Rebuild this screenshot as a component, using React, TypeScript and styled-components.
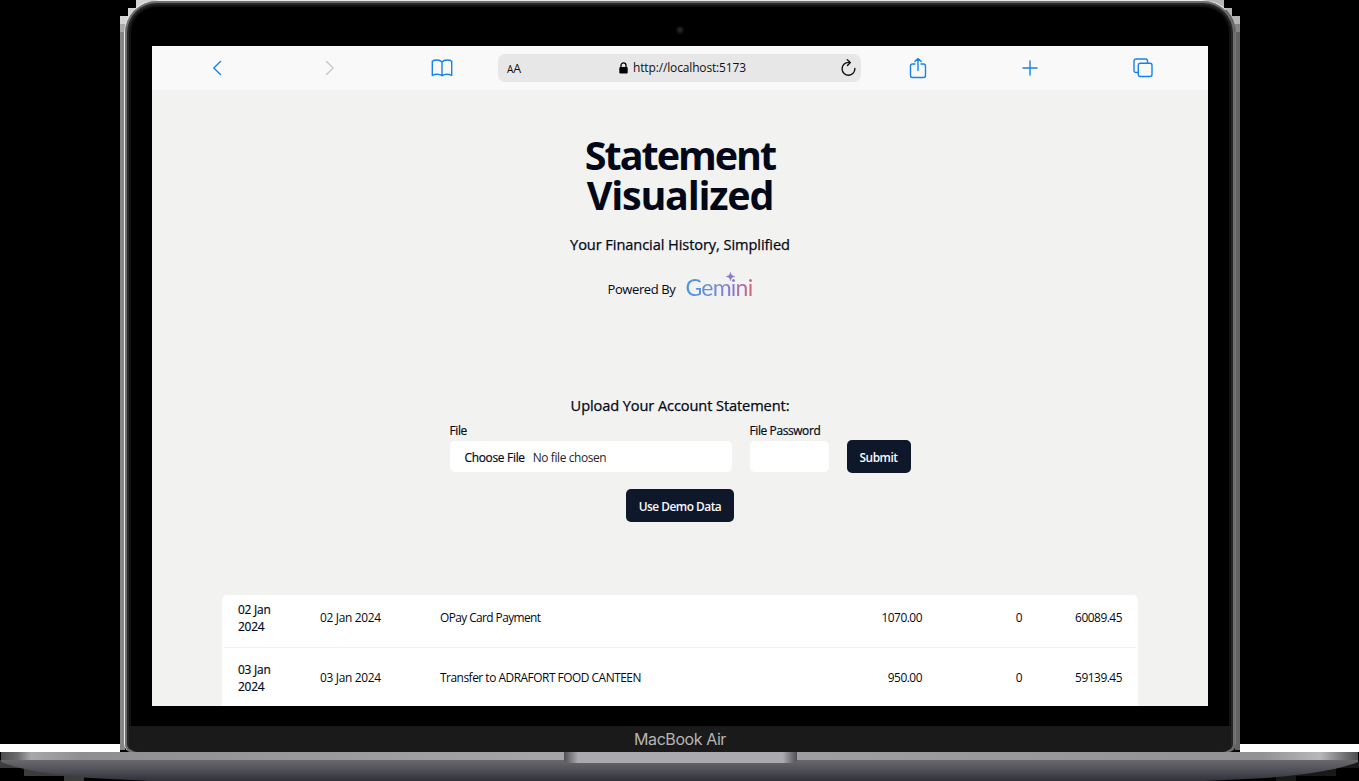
import React from "react";
import styled, { createGlobalStyle } from "styled-components";

const Global = createGlobalStyle`
  * { box-sizing: border-box; }
  html, body { margin: 0; background: #000; }
  body { font-family: "Open Sans", "Noto Sans", sans-serif; color: #020817; overflow: hidden; }
`;

const Stage = styled.main`
  position: relative;
  width: 1359px;
  height: 781px;
  display: flex;
  flex-direction: column;
  background: #000;
  overflow: hidden;
`;

const EdgeArt = styled.svg`
  position: absolute;
  inset: 0;
  pointer-events: none;
`;

const Lid = styled.section`
  position: relative;
  width: 1112px;
  height: 752px;
  flex: none;
  margin-left: 124px;
  border-radius: 33px 33px 8px 8px;
  border: 1px solid #e9e9e9;
  border-right-color: #777;
  border-bottom: 0;
  background: #000;
  box-shadow: inset 0 0 0 2px #6e6e6e, inset 0 0 0 4px #262626, inset 0 0 0 6px #111;
  display: flex;
  flex-direction: column;
  align-items: center;
  overflow: hidden;
`;

const Bezel = styled.div`
  height: 45px;
  flex: none;
  padding-top: 25px;
`;

const Camera = styled.div`
  width: 8px;
  height: 8px;
  border-radius: 50%;
  background: radial-gradient(circle, #242424 0 1.5px, #0d0d0d 3px);
`;

const Screen = styled.div`
  width: 1056px;
  height: 660px;
  flex: none;
  background: #f2f2f0;
  overflow: hidden;
`;

const Chin = styled.div`
  width: 1102px;
  height: 26px;
  margin-top: 20px;
  flex: none;
  border-radius: 0 0 8px 8px;
  background: #1a1a1a;
  color: #b5b5b5;
  display: flex;
  align-items: center;
  justify-content: center;
  font: 400 16px/26px Inter, sans-serif;
  letter-spacing: -0.42px;
`;

const Toolbar = styled.header`
  height: 44px;
  padding: 0 9px;
  display: grid;
  grid-template-columns: repeat(3, 1fr) 363px repeat(3, 1fr);
  align-items: center;
  justify-items: center;
  background: #f9f9f9;
  color: #1683ec;
  border-bottom: 1px solid #f6f6f5;
`;

const Address = styled.div`
  width: 363px;
  height: 28px;
  margin-left: -1px;
  padding: 0 4px 0 9px;
  border-radius: 7px;
  background: #e7e7e7;
  color: #111;
  display: grid;
  grid-template-columns: 61px 1fr 60px;
  align-items: center;
`;

const TextSize = styled.span`
  font-size: 12.5px;
  letter-spacing: -0.2px;
  padding-top: 2px;
  small { font-size: 10px; }
`;

const Url = styled.span`
  display: flex;
  align-items: center;
  justify-content: center;
  gap: 5px;
  font-size: 12px;
  letter-spacing: -0.15px;
`;

const Reload = styled.span`
  display: flex;
  justify-content: flex-end;
`;

const Icon = styled.svg`
  display: block;
  fill: none;
  stroke: currentColor;
  stroke-width: 1.4;
  stroke-linecap: round;
  stroke-linejoin: round;
`;

const Hero = styled.div`
  height: 303px;
  padding-top: 45px;
  display: flex;
  flex-direction: column;
  align-items: center;
`;

const Title = styled.h1`
  margin: 0;
  font-size: 39.5px;
  line-height: 40px;
  font-weight: 700;
  text-align: center;
`;

const TitleLine = styled.span<{ $spacing: string }>`
  display: block;
  letter-spacing: ${(p) => p.$spacing};
`;

const Subtitle = styled.p<{ $spacing: string }>`
  margin: 0;
  font-size: 14.6px;
  line-height: 24px;
  font-weight: 500;
  -webkit-text-stroke: 0.25px currentColor;
  letter-spacing: ${(p) => p.$spacing};
`;

const Tagline = styled.div`
  margin-top: 17px;
`;

const Powered = styled.div`
  margin-top: 15px;
  height: 34px;
  display: flex;
  align-items: center;
  gap: 10px;
  font-size: 13px;
  letter-spacing: -0.4px;
  span { padding-top: 2px; }
`;

const Gemini = styled.div`
  position: relative;
  top: -1px;
  font: 400 23px/28px Lato, sans-serif;
  letter-spacing: -0.75px;
  color: transparent;
  background: linear-gradient(90deg, #4796e3, #6f8bdc 45%, #9177c7 75%, #ca6673);
  background-clip: text;
  -webkit-background-clip: text;
`;

const Spark = styled.svg`
  position: absolute;
  left: 41px;
  top: -1px;
`;

const UploadForm = styled.form`
  height: 202px;
  display: flex;
  flex-direction: column;
  align-items: center;
`;

const Fields = styled.div`
  margin-top: 5px;
  display: flex;
  align-items: flex-end;
`;

const Field = styled.label<{ $width: number }>`
  width: ${(p) => p.$width}px;
  margin-right: 17px;
  font-size: 11.9px;
  line-height: 16px;
  font-weight: 500;
  letter-spacing: -0.36px;
  -webkit-text-stroke: 0.2px currentColor;
`;

const Box = styled.span`
  height: 31px;
  margin: 3px 1px 1px 0;
  padding: 0 15px;
  border-radius: 5px;
  background: #fff;
  display: flex;
  align-items: center;
  gap: 8px;
  letter-spacing: -0.28px;
  em { font-style: normal; font-weight: 400; color: #26282e; letter-spacing: -0.38px; -webkit-text-stroke: 0; }
`;

const Button = styled.button<{ $width: number }>`
  width: ${(p) => p.$width}px;
  height: 33px;
  padding: 0;
  border: 0;
  border-radius: 5px;
  background: #0f172a;
  color: #f8fafc;
  font: 600 11.9px "Open Sans", sans-serif;
  letter-spacing: -0.5px;
`;

const DemoRow = styled.div`
  margin-top: 16px;
`;

const Card = styled.div`
  width: 916px;
  height: 130px;
  margin: 0 auto;
  padding: 0 2px;
  border-radius: 5px 5px 0 0;
  background: #fff;
  overflow: hidden;
`;

const Table = styled.table`
  width: 912px;
  margin-top: -7px;
  table-layout: fixed;
  border-collapse: separate;
  border-spacing: 0;
  font-size: 11.9px;
  line-height: 17px;
`;

const Cell = styled.td<{ $w: number; $right?: boolean; $strong?: boolean; $spacing?: string }>`
  width: ${(p) => p.$w}px;
  height: 60px;
  padding: 0 14px;
  border-bottom: 1px solid #f1f1f1;
  text-align: ${(p) => (p.$right ? "right" : "left")};
  font-weight: ${(p) => (p.$strong ? 500 : 400)};
  -webkit-text-stroke: ${(p) => (p.$strong ? "0.2px currentColor" : "0")};
  letter-spacing: ${(p) => p.$spacing ?? "-0.48px"};
`;

const rows = [
  { day: "02 Jan", text: "OPay Card Payment", debit: "1070.00", credit: "0", balance: "60089.45" },
  { day: "03 Jan", text: "Transfer to ADRAFORT FOOD CANTEEN", debit: "950.00", credit: "0", balance: "59139.45" },
];

function BrowserBar() {
  return (
    <Toolbar>
      <Icon width="10" height="16" viewBox="0 0 10 16"><path d="M8.5 1.5 1.8 8l6.7 6.5" /></Icon>
      <Icon width="10" height="16" viewBox="0 0 10 16" color="#c9c9c9"><path d="m1.5 1.5 6.7 6.5-6.7 6.5" /></Icon>
      <Icon width="22" height="18" viewBox="0 0 22 18">
        <path d="M11 3C9.8 1.6 8 1 6 1 4 1 2.3 1.4 1.3 2.2v14.3C2.6 15.7 4.3 15.3 6 15.3s3.7.4 5 1.5c1.3-1.1 3.3-1.5 5-1.5s3.4.4 4.7 1.2V2.2C19.7 1.4 18 1 16 1s-3.8.6-5 2Zm0 0v13.5" />
      </Icon>
      <Address>
        <TextSize><small>A</small>A</TextSize>
        <Url>
          <svg width="9" height="12" viewBox="0 0 9 12">
            <rect x=".3" y="5" width="8.4" height="6.5" rx="1" fill="#000" />
            <path d="M2 5V3.4a2.5 2.5 0 0 1 5 0V5" fill="none" stroke="#000" strokeWidth="1.3" />
          </svg>
          http://localhost:5173
        </Url>
        <Reload>
          <Icon width="17" height="18" viewBox="0 0 17 18"><path d="M14.9 9.5a6.4 6.4 0 1 1-6.4-6.1h1.4M7.3.8l3 2.7-2.8 3" /></Icon>
        </Reload>
      </Address>
      <Icon width="18" height="22" viewBox="0 0 18 22">
        <path d="M6 7H3.4A1.9 1.9 0 0 0 1.5 8.9v9.7a1.9 1.9 0 0 0 1.9 1.9h11.2a1.9 1.9 0 0 0 1.9-1.9V8.9A1.9 1.9 0 0 0 14.6 7H12M9 13.5V1.5M5.8 4.5 9 1.4l3.2 3.1" />
      </Icon>
      <Icon width="16" height="16" viewBox="0 0 16 16"><path d="M8 1v14M1 8h14" /></Icon>
      <Icon width="20" height="20" viewBox="0 0 20 20">
        <rect x="5.3" y="5.3" width="13.7" height="13.2" rx="2" />
        <path d="M5 14.5H3a2 2 0 0 1-2-2V3a2 2 0 0 1 2-2h9.5a2 2 0 0 1 2 2v2" />
      </Icon>
    </Toolbar>
  );
}

const BaseArt = styled.svg`
  flex: none;
  display: block;
`;

function LaptopBase() {
  return (
    <BaseArt width="1359" height="29" viewBox="0 0 1359 29">
      <defs>
        <linearGradient id="deck" x1="0" x2="1" y1="0" y2="0">
          <stop offset="0" stopColor="#4c4c4e" /><stop offset=".012" stopColor="#6a6a6c" />
          <stop offset=".022" stopColor="#a8a8aa" /><stop offset=".06" stopColor="#8e8e90" />
          <stop offset=".4" stopColor="#a5a5a8" /><stop offset=".93" stopColor="#929294" />
          <stop offset=".972" stopColor="#b8b8ba" /><stop offset="1" stopColor="#4c4c4e" />
        </linearGradient>
        <linearGradient id="under" x1="0" x2="0" y1="0" y2="1">
          <stop offset="0" stopColor="#68686c" /><stop offset=".5" stopColor="#4f5057" /><stop offset="1" stopColor="#303038" />
        </linearGradient>
        <linearGradient id="notch" x1="0" x2="1" y1="0" y2="0">
          <stop offset="0" stopColor="#505054" /><stop offset=".06" stopColor="#aaaaae" />
          <stop offset=".94" stopColor="#aaaaae" /><stop offset="1" stopColor="#505054" />
        </linearGradient>
      </defs>
      <path d="M0 9v7h24v8h40v5h20V20L0 8Z" fill="#3c3c3d" />
      <path d="M1359 9v7h-23v8h-40v5h-20V20Z" fill="#191919" />
      <path d="M1 8h1357v2c-20 8-54 13-92 16l-60 3H150l-60-3C54 23 21 18 1 10Z" fill="url(#under)" />
      <rect x="1" width="1357" height="8" fill="url(#deck)" />
      <path d="M564 0h233v8c0 2-4 3-10 3H574c-6 0-10-1-10-3Z" fill="url(#notch)" />
    </BaseArt>
  );
}

export default function App() {
  return (
    <Stage>
      <Global />
      <EdgeArt width="1359" height="781" shapeRendering="crispEdges">
        <path d="M120 16h8V8h8V0h20v32h-36Z" fill="#d4d4d4" />
        <path d="M1240 16h-8V8h-8V0h-20v32h36Z" fill="#b5b5b5" />
        <path d="M120 24h5v8h-5Z" fill="#aaa" />
        <path d="M120 32h5v718h-5Z" fill="#858585" />
        <path d="M1235 24h5v8h-5Z" fill="#858585" />
        <path d="M1235 32h5v718h-5Z" fill="#626262" />
        <path d="M0 744h120v8H0ZM1240 744h119v8h-119Z" fill="#fff" />
      </EdgeArt>
      <Lid>
        <Bezel><Camera /></Bezel>
        <Screen>
          <BrowserBar />
          <Hero>
            <Title>
              <TitleLine $spacing="-2px">Statement</TitleLine>
              <TitleLine $spacing="-1.25px">Visualized</TitleLine>
            </Title>
            <Tagline><Subtitle $spacing="-0.08px">Your Financial History, Simplified</Subtitle></Tagline>
            <Powered>
              <span>Powered By</span>
              <Gemini>
                Gemini
                <Spark width="9" height="9" viewBox="0 0 9 9"><path d="M4.5 0Q4.9 4.1 9 4.5 4.9 4.9 4.5 9 4.1 4.9 0 4.5 4.1 4.1 4.5 0Z" fill="#8579c8" stroke="#8579c8" strokeWidth=".3" /></Spark>
              </Gemini>
            </Powered>
          </Hero>
          <UploadForm>
            <Subtitle $spacing="-0.1px">Upload Your Account Statement:</Subtitle>
            <Fields>
              <Field $width={283}>File<Box>Choose File <em>No file chosen</em></Box></Field>
              <Field $width={80}>File Password<Box /></Field>
              <Button type="button" $width={64}>Submit</Button>
            </Fields>
            <DemoRow><Button type="button" $width={108}>Use Demo Data</Button></DemoRow>
          </UploadForm>
          <Card>
            <Table>
              <tbody>
                {rows.map((r) => (
                  <tr key={r.day}>
                    <Cell $w={82} $strong $spacing="-0.2px">{r.day}<br />2024</Cell>
                    <Cell $w={120} $spacing="-0.3px">{r.day} 2024</Cell>
                    <Cell $w={360} $spacing={r.day === "02 Jan" ? "-0.58px" : "-0.47px"}>{r.text}</Cell>
                    <Cell $w={150} $right>{r.debit}</Cell>
                    <Cell $w={100} $right>{r.credit}</Cell>
                    <Cell $w={100} $right>{r.balance}</Cell>
                  </tr>
                ))}
              </tbody>
            </Table>
          </Card>
        </Screen>
        <Chin>MacBook Air</Chin>
      </Lid>
      <LaptopBase />
    </Stage>
  );
}
